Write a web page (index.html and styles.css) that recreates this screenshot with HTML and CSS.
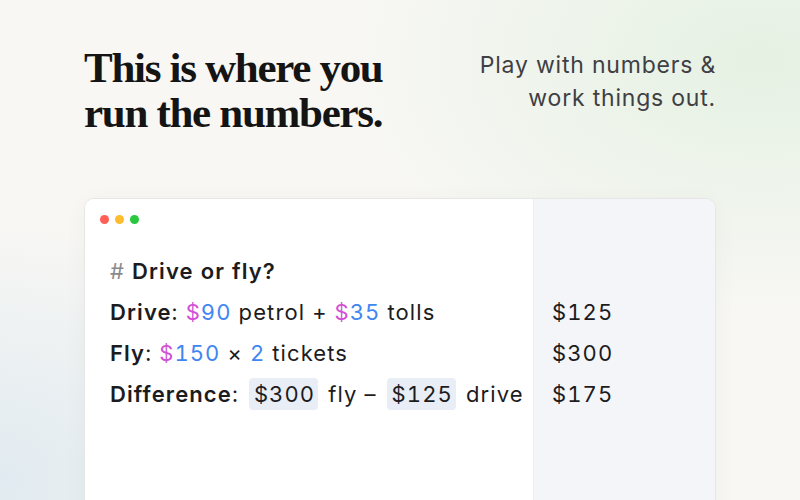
FILE: index.html
```html
<!DOCTYPE html>
<html lang="en">
<head>
<meta charset="utf-8">
<title>Run the numbers</title>
<link rel="stylesheet" href="styles.css">
</head>
<body>
<main class="page">
  <header class="hero">
    <h1 class="headline">This is where you<br>run the numbers.</h1>
    <p class="tagline">Play with numbers &amp;<br>work things out.</p>
  </header>

  <section class="window">
    <div class="editor">
      <div class="toolbar">
        <span class="dot dot-red"></span>
        <span class="dot dot-yellow"></span>
        <span class="dot dot-green"></span>
      </div>
      <div class="line heading-line"><span class="hash">#</span> Drive or fly?</div>
      <div class="line"><b>Drive</b>: <span class="cur">$</span><span class="num">90</span> petrol + <span class="cur">$</span><span class="num">35</span> tolls</div>
      <div class="line"><b>Fly</b>: <span class="cur">$</span><span class="num">150</span> × <span class="num">2</span> tickets</div>
      <div class="line"><b>Difference</b>: <span class="ref">$300</span> fly – <span class="ref">$125</span> drive</div>
    </div>
    <div class="results">
      <div class="line"></div>
      <div class="line">$125</div>
      <div class="line">$300</div>
      <div class="line">$175</div>
    </div>
  </section>
</main>
</body>
</html>
```
FILE: styles.css
```css
* { box-sizing: border-box; }

html, body {
  margin: 0;
  height: 100%;
  overflow: hidden;
}

body {
  background:
    radial-gradient(ellipse 420px 260px at 760px 60px, rgba(226, 240, 224, 0.85), rgba(226, 240, 224, 0) 100%),
    radial-gradient(ellipse 300px 260px at 0px 480px, rgba(222, 233, 240, 0.9), rgba(222, 233, 240, 0) 100%),
    #f8f7f4;
  font-family: Inter, "Noto Sans", sans-serif;
  color: #1c1c1e;
}

.page {
  padding: 0 84px;
}

.hero {
  display: flex;
  justify-content: space-between;
  align-items: flex-start;
  padding-top: 45px;
  height: 198px;
}

.headline {
  margin: 0;
  font-family: "Liberation Serif", "Times New Roman", serif;
  font-weight: 700;
  font-size: 43px;
  line-height: 45px;
  letter-spacing: -1.3px;
  color: #141414;
}

.tagline {
  margin: 4px 0 0;
  text-align: right;
  font-family: Inter, "Noto Sans", sans-serif;
  font-size: 23px;
  line-height: 33px;
  letter-spacing: 0.8px;
  color: #3f3f44;
}

.window {
  display: flex;
  height: 320px;
  background: #fff;
  border: 1px solid #e6e6e4;
  border-radius: 10px;
  box-shadow: 0 4px 24px rgba(0, 0, 0, 0.04);
  overflow: hidden;
}

.editor {
  width: 448px;
  padding: 0 0 0 25px;
  background: #fff;
}

.toolbar {
  display: flex;
  gap: 6px;
  height: 52px;
  padding: 16px 0 0 15px;
  margin-left: -25px;
}

.dot {
  width: 9px;
  height: 9px;
  border-radius: 50%;
}
.dot-red { background: #fe5f57; }
.dot-yellow { background: #febc2e; }
.dot-green { background: #28c840; }

.line {
  height: 41px;
  line-height: 41px;
  font-size: 22px;
  letter-spacing: 1.1px;
  font-variant-numeric: tabular-nums;
  white-space: nowrap;
}

.line b { font-weight: 600; }

.heading-line { font-weight: 600; }
.hash { color: #8a8a8e; font-weight: 400; }

.cur { color: #d24fd6; }
.num { color: #3f86f2; }

.ref {
  background: #e8edf6;
  border-radius: 4px;
  padding: 3px 3px 3px 5px;
  margin: 0 3px;
}

.results {
  flex: 1;
  padding: 52px 0 0 18px;
  background: #f4f5f8;
  border-left: 1px solid #ecedf1;
}
```
